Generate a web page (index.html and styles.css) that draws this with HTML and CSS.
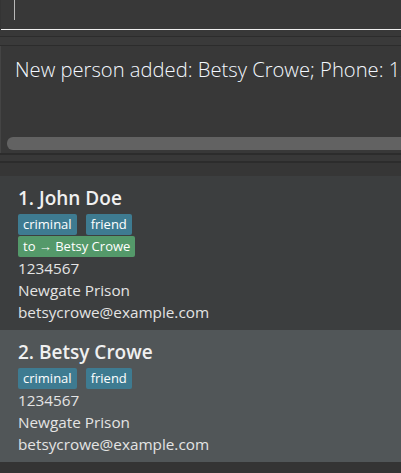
FILE: index.html
```html
<!DOCTYPE html>
<html>
<head>
<meta charset="utf-8">
<link rel="stylesheet" href="styles.css">
</head>
<body>
<div class="app">
  <div class="cmd"><span class="caret"></span></div>
  <div class="band band-a"></div>
  <div class="band band-b"></div>
  <div class="result">
    <div class="result-text">New person added: Betsy Crowe; Phone: 1234567; Email: betsycrowe@example.com</div>
    <div class="scrollbar"></div>
  </div>
  <div class="band band-c"></div>
  <div class="band band-d"></div>
  <div class="list">
    <div class="card even">
      <div class="name">1. John Doe</div>
      <div class="tag-group">
        <div class="tags">
          <span class="tag">criminal</span>
          <span class="tag">friend</span>
        </div>
        <div class="tags">
          <span class="tag rel">to → Betsy Crowe</span>
        </div>
      </div>
      <div class="line">1234567</div>
      <div class="line">Newgate Prison</div>
      <div class="line">betsycrowe@example.com</div>
    </div>
    <div class="card odd">
      <div class="name">2. Betsy Crowe</div>
      <div class="tag-group">
        <div class="tags">
          <span class="tag">criminal</span>
          <span class="tag">friend</span>
        </div>
      </div>
      <div class="line">1234567</div>
      <div class="line">Newgate Prison</div>
      <div class="line">betsycrowe@example.com</div>
    </div>
  </div>
</div>
</body>
</html>
```
FILE: styles.css
```css
html, body {
  margin: 0;
  padding: 0;
  background: #343434;
  overflow: hidden;
}
.app {
  width: 401px;
  height: 473px;
  overflow: hidden;
  font-family: "Open Sans", "Noto Sans", sans-serif;
  display: flex;
  flex-direction: column;
}
.cmd {
  height: 29px;
  background: #383838;
  border-bottom: 1px solid #f0f0f0;
  margin-left: 1px;
  padding-left: 13px;
  display: flex;
  align-items: flex-start;
}
.caret {
  width: 1px;
  height: 20px;
  background: #b8b8b8;
}
.band { flex: none; }
.band-a {
  height: 6px;
  background: #383838;
  border-bottom: 1px solid #2c2c2c;
}
.band-b {
  height: 8px;
  background: #3a3a3a;
  border-bottom: 1px solid #2c2c2c;
}
.result {
  height: 107px;
  background: #383838;
  border-left: 1px solid #444444;
  position: relative;
  overflow: hidden;
}
.result-text {
  position: absolute;
  left: 14px;
  top: 9px;
  white-space: nowrap;
  font-size: 20.2px;
  font-weight: 300;
  color: #f4f8ff;
}
.scrollbar {
  position: absolute;
  left: 6px;
  right: -10px;
  top: 91px;
  height: 13px;
  border-radius: 6px;
  background: #626262;
}
.band-c {
  height: 6px;
  background: #383838;
  border-top: 2px solid #2c2c2c;
}
.band-d {
  height: 13px;
  background: #363636;
  border-top: 2px solid #2c2c2c;
}
.list {
  flex: 1;
  display: flex;
  flex-direction: column;
}
.card {
  padding: 10px 0 7px 18px;
  color: #e4e4e4;
}
.even { background: #3c3e3f; }
.odd { background: #515658; }
.name {
  font-size: 19px;
  font-weight: 600;
  line-height: 24px;
  color: #f0f0f0;
  margin-bottom: 4px;
}
.tag-group {
  display: flex;
  flex-direction: column;
  gap: 1px;
}
.tags {
  display: flex;
  gap: 9px;
}
.tag {
  background: #3e7b91;
  color: #ffffff;
  font-size: 13px;
  line-height: 21px;
  padding: 0 5px;
  border-radius: 2px;
}
.tag.rel {
  background: #54996a;
}
.line {
  font-size: 15.3px;
  line-height: 22px;
}
```
